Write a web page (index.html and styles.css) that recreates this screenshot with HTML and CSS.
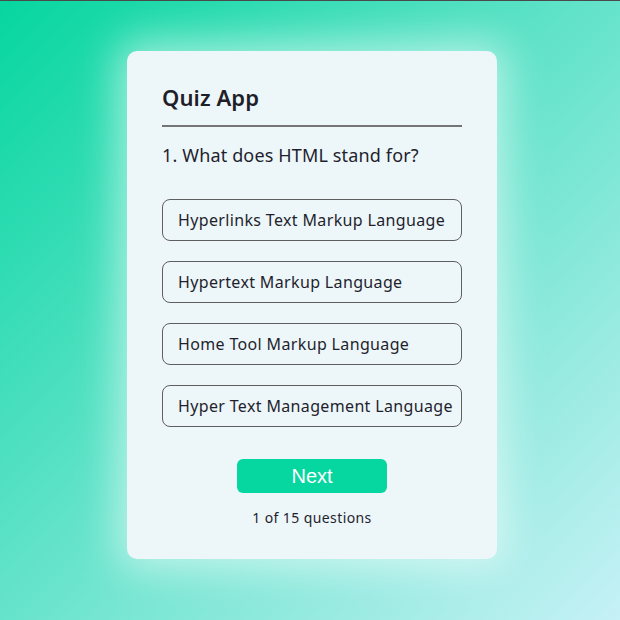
FILE: index.html
```html
<!DOCTYPE html>
<html lang="en">
<head>
<meta charset="utf-8">
<title>Quiz App</title>
<link rel="stylesheet" href="styles.css">
</head>
<body>
  <main class="app">
    <h1 class="title">Quiz App</h1>
    <div class="quiz">
      <h2 class="question">1. What does HTML stand for?</h2>
      <div class="answers">
        <button class="answer">Hyperlinks Text Markup Language</button>
        <button class="answer">Hypertext Markup Language</button>
        <button class="answer">Home Tool Markup Language</button>
        <button class="answer">Hyper Text Management Language</button>
      </div>
      <button class="next">Next</button>
      <p class="progress">1 of 15 questions</p>
    </div>
  </main>
</body>
</html>
```
FILE: styles.css
```css
* {
  box-sizing: border-box;
}

html, body {
  margin: 0;
  padding: 0;
}

body {
  height: 620px;
  border-top: 1px solid #4a4a4a;
  background: linear-gradient(135deg, #06d6a0 0%, #c6f1f6 100%);
  font-family: "Noto Sans", sans-serif;
  color: #1f1f2e;
  display: flex;
  justify-content: center;
  align-items: flex-start;
  padding: 50px 0 0 4px;
}

.app {
  width: 370px;
  height: 508px;
  background: #edf6f9;
  border-radius: 10px;
  padding: 26px 35px 30px;
  box-shadow: 0 0 40px 10px rgba(255, 255, 255, 0.55);
}

.title {
  margin: 0;
  font-size: 22px;
  font-weight: 600;
  line-height: 40px;
  padding-bottom: 8px;
  border-bottom: 2px solid #757575;
  color: #1f1f2a;
  letter-spacing: 0.1px;
}

.question {
  margin: 14px 0 0;
  font-size: 18px;
  font-weight: 400;
  line-height: 28px;
  color: #1f1f2e;
  letter-spacing: 0.15px;
}

.answers {
  display: flex;
  flex-direction: column;
  gap: 20px;
  margin-top: 30px;
}

.answer {
  display: block;
  width: 100%;
  height: 42px;
  text-align: left;
  padding: 0 15px;
  background: transparent;
  border: 1px solid #5f5f5f;
  border-radius: 8px;
  font-family: "Noto Sans", sans-serif;
  font-size: 16px;
  letter-spacing: 0.35px;
  color: #1f1f2e;
  white-space: nowrap;
  overflow: visible;
}

.next {
  display: block;
  margin: 32px auto 0;
  width: 150px;
  height: 34px;
  background: #06d6a0;
  border: none;
  border-radius: 6px;
  color: #ffffff;
  font-family: "Liberation Sans", Arial, sans-serif;
  font-size: 20px;
}

.progress {
  margin: 15px 0 0;
  text-align: center;
  font-size: 14px;
  letter-spacing: 0.4px;
  color: #1f1f2e;
}
```
